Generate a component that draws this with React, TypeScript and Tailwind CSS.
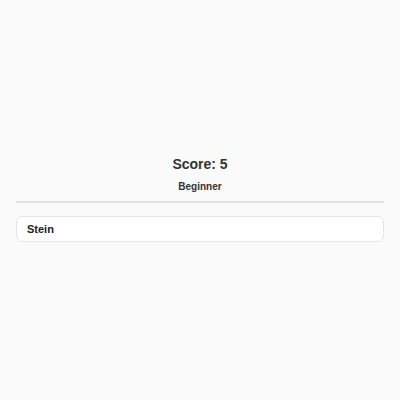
export default function App() {
  return (
    <div className="w-[400px] h-[400px] bg-[#fafafa] font-['Liberation_Sans',Arial,sans-serif] text-[#333] px-4 pt-[155px]">
      <div className="text-center text-[14px] font-bold leading-[18px]">Score: 5</div>
      <div className="text-center text-[10px] font-bold leading-[14px] mt-[7px]">Beginner</div>
      <div className="h-[2px] bg-[#e0e0e0] mt-[7px]" />
      <div className="mt-[13px] h-[26px] rounded-[6px] border border-[#e6e6e6] bg-white flex items-center pl-[10px] pt-[1px] text-[11px] font-bold text-[#222]">
        Stein
      </div>
    </div>
  );
}
